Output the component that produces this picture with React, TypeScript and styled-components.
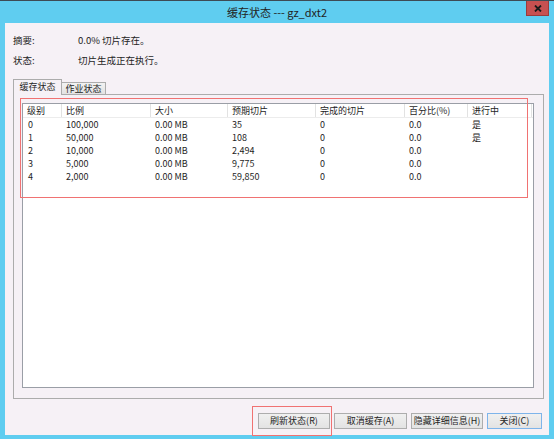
import React from 'react'
import styled, { createGlobalStyle } from 'styled-components'

const GlobalStyle = createGlobalStyle`
    html, body {
        margin: 0;
        padding: 0;
        background: #5fcdf0;
    }
    body {
        font-family: "Noto Sans CJK SC", "Noto Sans", sans-serif;
        color: #1e1e1e;
    }
`

const Window = styled.div`
    position: relative;
    width: 554px;
    height: 439px;
    box-sizing: border-box;
    background: #5fcdf0;
    border-top: 1px solid #3d4b55;
    display: flex;
    flex-direction: column;
    overflow: hidden;
`

const TitleBar = styled.div`
    height: 22px;
    display: grid;
    grid-template-columns: 1fr auto 1fr;
    align-items: start;
`

const Title = styled.div`
    grid-column: 2;
    font-size: 11px;
    line-height: 22px;
    color: #222;
`

const CloseButton = styled.div`
    grid-column: 3;
    justify-self: end;
    margin-right: 5px;
    width: 23px;
    height: 15px;
    box-sizing: border-box;
    background: #c75050;
    border: 1px solid #9a3b3b;
    border-top: none;
    display: flex;
    align-items: center;
    justify-content: center;
`

const Client = styled.div`
    margin: 0 5px 4px 5px;
    height: 412px;
    background: #f6f1f6;
    display: flex;
    flex-direction: column;
    padding-top: 7px;
    box-sizing: border-box;
`

const InfoRow = styled.div`
    display: grid;
    grid-template-columns: 65px 1fr;
    height: 20px;
    align-items: center;
    padding-left: 8px;
    font-size: 9.5px;
`

const TabArea = styled.div`
    margin: 9px 0 0 8px;
    width: 531px;
    display: flex;
    flex-direction: column;
`

const TabStrip = styled.div`
    height: 15px;
    display: flex;
    align-items: flex-end;
`

const Tab = styled.div<{ $active?: boolean }>`
    box-sizing: border-box;
    width: ${p => (p.$active ? 49 : 45)}px;
    height: ${p => (p.$active ? 16 : 12)}px;
    margin-bottom: ${p => (p.$active ? -1 : 0)}px;
    margin-left: ${p => (p.$active ? 0 : -1)}px;
    border: 1px solid #acacac;
    border-bottom: none;
    background: ${p => (p.$active ? '#f6f1f6' : 'linear-gradient(#f2f2f2, #e3e3e3)')};
    position: relative;
    z-index: ${p => (p.$active ? 1 : 0)};
    font-size: 9px;
    line-height: ${p => (p.$active ? 14 : 11)}px;
    text-align: center;
`

const Panel = styled.div`
    box-sizing: border-box;
    height: 305px;
    border: 1px solid #acacac;
    padding: 8px 9px 10px 8px;
`

const ListView = styled.div`
    box-sizing: border-box;
    height: 100%;
    border: 1px solid #9a9ea6;
    background: #fff;
`

const Grid = styled.div<{ $header?: boolean }>`
    display: grid;
    grid-template-columns: 39px 89px 77px 88px 89px 63px 64px;
    height: ${p => (p.$header ? 14 : 13)}px;
    border-bottom: ${p => (p.$header ? '1px solid #ececec' : 'none')};
    box-sizing: border-box;
    font-size: 9px;
    align-items: center;
`

const HeadCell = styled.div`
    height: 100%;
    line-height: 13px;
    padding-left: 4px;
    border-right: 1px solid #e2e2e2;
    white-space: nowrap;
`

const Cell = styled.div<{ $first?: boolean }>`
    padding-left: ${p => (p.$first ? 5 : 4)}px;
    white-space: nowrap;
    line-height: 13px;
`

const ButtonRow = styled.div`
    margin-top: 14px;
    display: flex;
    justify-content: flex-end;
    gap: 4px;
    padding-right: 7px;
`

const Button = styled.div<{ $w: number; $default?: boolean }>`
    box-sizing: border-box;
    width: ${p => p.$w}px;
    height: 16px;
    border: 1px solid ${p => (p.$default ? '#7eb4ea' : '#adadad')};
    background: linear-gradient(#f0f0f0, #e3e3e3);
    font-size: 9px;
    line-height: 14px;
    text-align: center;
    white-space: nowrap;
`

const Mark = styled.div<{ $x: number; $y: number; $w: number; $h: number }>`
    position: absolute;
    left: ${p => p.$x}px;
    top: ${p => p.$y}px;
    width: ${p => p.$w}px;
    height: ${p => p.$h}px;
    box-sizing: border-box;
    border: 1px solid #f07272;
    pointer-events: none;
`

const headers = ['级别', '比例', '大小', '预期切片', '完成的切片', '百分比(%)', '进行中']

const rows = [
    ['0', '100,000', '0.00 MB', '35', '0', '0.0', '是'],
    ['1', '50,000', '0.00 MB', '108', '0', '0.0', '是'],
    ['2', '10,000', '0.00 MB', '2,494', '0', '0.0', ''],
    ['3', '5,000', '0.00 MB', '9,775', '0', '0.0', ''],
    ['4', '2,000', '0.00 MB', '59,850', '0', '0.0', '']
]

const App: React.FC = () => {
    return (
        <>
            <GlobalStyle />
            <Window>
                <TitleBar>
                    <Title>缓存状态 --- gz_dxt2</Title>
                    <CloseButton>
                        <svg width="8" height="7" viewBox="0 0 8 7">
                            <path d="M1 0.5 L7 6.5 M7 0.5 L1 6.5" stroke="#1a1a1a" strokeWidth="1.8" />
                        </svg>
                    </CloseButton>
                </TitleBar>
                <Client>
                    <InfoRow><span>摘要:</span><span>0.0% 切片存在。</span></InfoRow>
                    <InfoRow><span>状态:</span><span>切片生成正在执行。</span></InfoRow>
                    <TabArea>
                        <TabStrip>
                            <Tab $active>缓存状态</Tab>
                            <Tab>作业状态</Tab>
                        </TabStrip>
                        <Panel>
                            <ListView>
                                <Grid $header>
                                    {headers.map(h => <HeadCell key={h}>{h}</HeadCell>)}
                                </Grid>
                                {rows.map(r => (
                                    <Grid key={r[0]}>
                                        {r.map((c, i) => <Cell key={i} $first={i === 0}>{c}</Cell>)}
                                    </Grid>
                                ))}
                            </ListView>
                        </Panel>
                    </TabArea>
                    <ButtonRow>
                        <Button $w={72}>刷新状态(R)</Button>
                        <Button $w={73}>取消缓存(A)</Button>
                        <Button $w={72}>隐藏详细信息(H)</Button>
                        <Button $w={55} $default>关闭(C)</Button>
                    </ButtonRow>
                </Client>
                <Mark $x={20} $y={97} $w={508} $h={100} />
                <Mark $x={252} $y={405} $w={80} $h={30} />
            </Window>
        </>
    )
}

export default App
